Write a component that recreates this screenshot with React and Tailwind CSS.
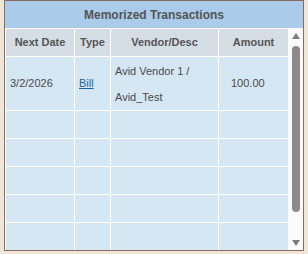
const rows = [
  { date: '3/2/2026', type: 'Bill', vendor: ['Avid Vendor 1 /', 'Avid_Test'], amount: '100.00' },
  null,
  null,
  null,
  null,
  null,
]

function Cell({ className = '', children }) {
  return <div className={`bg-[#d6e7f4] ${className}`}>{children}</div>
}

export default function App() {
  return (
    <div
      className="w-[308px] h-[254px] bg-[#efe6da] pl-[4px]"
      style={{ fontFamily: '"Liberation Sans", Arial, sans-serif' }}
    >
      <div className="w-[300px] h-[251px] border border-[#8b6b5b] flex flex-col bg-white">
        {/* title */}
        <div className="h-[27px] bg-[#aacbea] flex items-center justify-center text-[12px] font-bold text-[#555]">
          Memorized Transactions
        </div>

        <div className="flex flex-1 min-h-0">
          {/* table */}
          <div className="w-[283px] bg-white pl-[1px] pt-[1px] flex flex-col gap-[1px]">
            <div className="grid grid-cols-[68px_35px_107px_69px] gap-[1px] h-[27px] text-[11px] font-bold text-[#555]">
              <div className="bg-[#d5dde5] flex items-center justify-center">Next Date</div>
              <div className="bg-[#d5dde5] flex items-center justify-center">Type</div>
              <div className="bg-[#d5dde5] flex items-center justify-center">Vendor/Desc</div>
              <div className="bg-[#d5dde5] flex items-center justify-center">Amount</div>
            </div>
            {rows.map((r, i) => (
              <div
                key={i}
                className={`grid grid-cols-[68px_35px_107px_69px] gap-[1px] text-[11px] text-[#4a4a4a] ${
                  r ? 'h-[53px]' : 'h-[27px]'
                }`}
              >
                <Cell className="flex items-center pl-[4px]">{r && r.date}</Cell>
                <Cell className="flex items-center pl-[4px]">
                  {r && <span className="text-[#1a62a8] underline">{r.type}</span>}
                </Cell>
                <Cell className="flex flex-col justify-center pl-[4px] leading-[26px]">
                  {r && r.vendor.map(v => <span key={v}>{v}</span>)}
                </Cell>
                <Cell className="flex items-center pl-[12px]">{r && r.amount}</Cell>
              </div>
            ))}
          </div>

          {/* scrollbar */}
          <div className="w-[15px] bg-[#fbfbfb] flex flex-col items-center pt-[5px]">
            <div className="w-0 h-0 border-l-[4.5px] border-r-[4.5px] border-b-[6px] border-l-transparent border-r-transparent border-b-[#7d7d7d]" />
            <div className="w-[8px] h-[166px] mt-[7px] rounded-full bg-[#8a8a8a]" />
            <div className="mt-[28px] w-0 h-0 border-l-[4.5px] border-r-[4.5px] border-t-[6px] border-l-transparent border-r-transparent border-t-[#7d7d7d]" />
          </div>
        </div>
      </div>
    </div>
  )
}
